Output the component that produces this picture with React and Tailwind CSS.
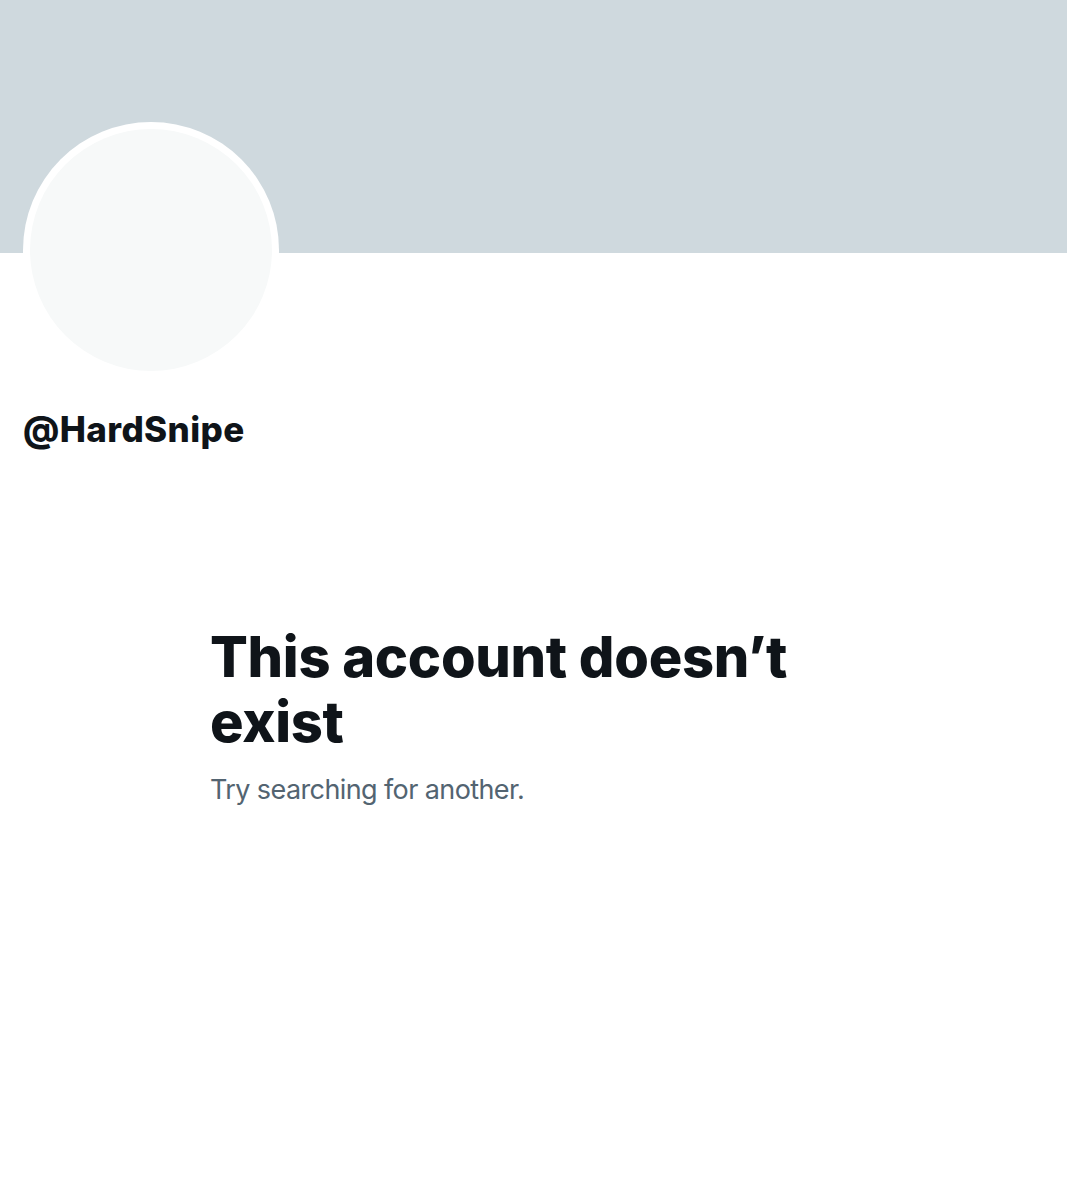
export default function App() {
  return (
    <div
      className="w-[1067px] h-[1200px] bg-white overflow-hidden"
      style={{ fontFamily: 'Inter, "Liberation Sans", Arial, sans-serif' }}
    >
      <div className="h-[253px] bg-[#cfd9de]" />
      <div className="ml-[23px] mt-[-131px] w-[256px] h-[256px] rounded-full bg-white p-[7px]">
        <div className="w-full h-full rounded-full bg-[#f7f9f9]" />
      </div>
      <div className="ml-[23px] mt-[31px] text-[35px] leading-[40px] font-extrabold text-[#0f1419] tracking-[0.4px]">
        @HardSnipe
      </div>
      <div className="ml-[210px] mt-[176px] w-[640px]">
        <h1 className="text-[56px] leading-[65px] font-extrabold text-[#0f1419] tracking-[-0.3px]">
          This account doesn’t exist
        </h1>
        <p className="mt-[19px] text-[27px] leading-[32px] text-[#536471] tracking-[-0.6px]">
          Try searching for another.
        </p>
      </div>
    </div>
  );
}
